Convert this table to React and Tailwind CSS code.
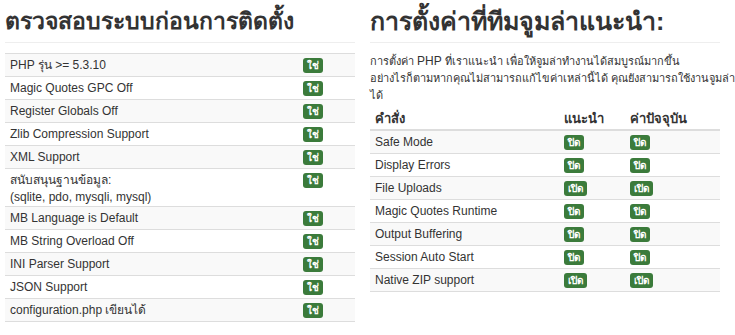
import React from 'react';

const checks = [
  ['PHP รุ่น >= 5.3.10'],
  ['Magic Quotes GPC Off'],
  ['Register Globals Off'],
  ['Zlib Compression Support'],
  ['XML Support'],
  ['สนับสนุนฐานข้อมูล:', '(sqlite, pdo, mysqli, mysql)'],
  ['MB Language is Default'],
  ['MB String Overload Off'],
  ['INI Parser Support'],
  ['JSON Support'],
  ['configuration.php เขียนได้'],
];

const settings = [
  ['Safe Mode', 'ปิด', 'ปิด'],
  ['Display Errors', 'ปิด', 'ปิด'],
  ['File Uploads', 'เปิด', 'เปิด'],
  ['Magic Quotes Runtime', 'ปิด', 'ปิด'],
  ['Output Buffering', 'ปิด', 'ปิด'],
  ['Session Auto Start', 'ปิด', 'ปิด'],
  ['Native ZIP support', 'เปิด', 'เปิด'],
];

const Badge = ({ children }) => (
  <span className="inline-block rounded-[3px] bg-[#3b7b3b] px-[4px] align-top text-[10px] font-bold leading-[15px] text-white">
    {children}
  </span>
);

export default function App() {
  return (
    <div
      className="flex w-[735px] h-[335px] gap-[15px] bg-white pl-[5px] text-[12px] text-[#333]"
      style={{ fontFamily: '"Liberation Sans", Arial, sans-serif' }}
    >
      {/* Left: pre-install check */}
      <div className="w-[350px]">
        <h2 className="pt-[6px] text-[23px] font-bold leading-[30px] text-[#333]">
          ตรวจสอบระบบก่อนการติดตั้ง
        </h2>
        <hr className="mt-[6px] mb-[10px] border-t border-[#eee]" />
        <table className="w-full border-collapse">
          <tbody>
            {checks.map((row, i) => (
              <tr key={i} className={`border-t border-[#ddd] last:border-b ${i % 2 === 0 ? 'bg-[#f9f9f9]' : 'bg-white'}`}>
                <td className={`px-[5px] pt-[3px] align-top ${row.length > 1 ? 'pb-0' : 'pb-[2px]'}`}>
                  {row.map((l, j) => (
                    <div key={j} className="h-[17px] leading-[17px]">{l}</div>
                  ))}
                </td>
                <td className="w-[57px] px-[5px] pt-[4px] pb-[2px] align-top">
                  <div className="h-[16px]">
                    <Badge>ใช่</Badge>
                  </div>
                </td>
              </tr>
            ))}
          </tbody>
        </table>
      </div>

      {/* Right: recommended settings */}
      <div className="w-[350px]">
        <h2 className="pt-[6px] text-[25px] font-bold leading-[30px] text-[#333]">
          การตั้งค่าที่ทีมจูมล่าแนะนำ:
        </h2>
        <hr className="mt-[6px] mb-[10px] border-t border-[#eee]" />
        <p className="whitespace-nowrap text-[11px] leading-[17px]">
          การตั้งค่า <span className="text-[12px]">PHP</span> ที่เราแนะนำ เพื่อให้จูมล่าทำงานได้สมบูรณ์มากขึ้น
          <br />
          อย่างไรก็ตามหากคุณไม่สามารถแก้ไขค่าเหล่านี้ได้ คุณยังสามารถใช้งานจูมล่า
          <br />
          ได้
        </p>
        <table className="mt-[4px] w-full border-collapse">
          <thead>
            <tr className="border-b-2 border-[#ddd]">
              <th className="px-[5px] pt-[2px] pb-[2px] text-left text-[13px] font-bold leading-[17px]">คำสั่ง</th>
              <th className="w-[66px] px-[5px] pt-[2px] pb-[2px] text-left text-[13px] font-bold leading-[17px]">แนะนำ</th>
              <th className="w-[95px] px-[5px] pt-[2px] pb-[2px] text-left text-[13px] font-bold leading-[17px]">ค่าปัจจุบัน</th>
            </tr>
          </thead>
          <tbody>
            {settings.map(([name, rec, cur], i) => (
              <tr key={i} className={`border-t border-[#ddd] last:border-b ${i % 2 === 0 ? 'bg-[#f9f9f9]' : 'bg-white'}`}>
                <td className="px-[5px] pt-[3px] pb-[2px]">
                  <div className="h-[17px] leading-[17px]">{name}</div>
                </td>
                <td className="px-[5px] pt-[4px] pb-[2px] align-top">
                  <div className="h-[16px]"><Badge>{rec}</Badge></div>
                </td>
                <td className="px-[5px] pt-[4px] pb-[2px] align-top">
                  <div className="h-[16px]"><Badge>{cur}</Badge></div>
                </td>
              </tr>
            ))}
          </tbody>
        </table>
      </div>
    </div>
  );
}
